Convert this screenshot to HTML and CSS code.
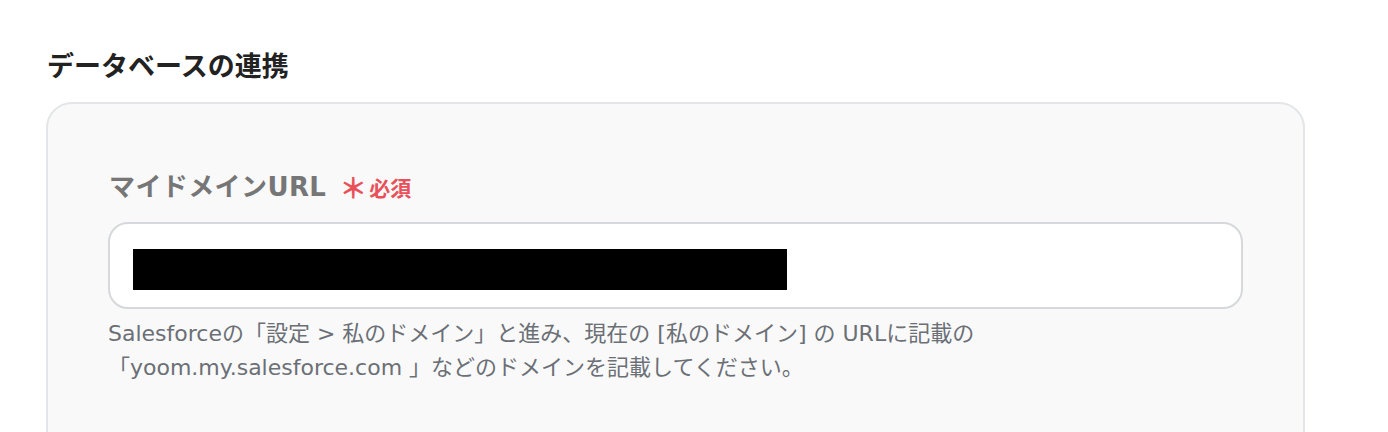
FILE: index.html
```html
<!DOCTYPE html>
<html lang="ja">
<head>
<meta charset="utf-8">
<link rel="stylesheet" href="styles.css">
</head>
<body>
<div class="page">
  <h2 class="title">データベースの連携</h2>
  <div class="card">
    <div class="field">
      <div class="label"><span class="name">マイドメインURL</span><span class="star">＊</span><span class="req">必須</span></div>
      <div class="input"><div class="mask"></div></div>
      <p class="help">Salesforceの「設定 &gt; 私のドメイン」と進み、現在の [私のドメイン] の URLに記載の<br>「yoom.my.salesforce.com 」などのドメインを記載してください。</p>
    </div>
  </div>
</div>
</body>
</html>
```

FILE: styles.css
```css
html, body {
  margin: 0;
  padding: 0;
  background: #ffffff;
}
body {
  font-family: "Noto Sans CJK JP", "Noto Sans", sans-serif;
}
.page {
  padding: 47px 83px 0 46px;
}
.title {
  margin: 0 0 19px 1px;
  font-size: 27px;
  line-height: 36px;
  font-weight: 700;
  color: #222222;
}
.card {
  background: #f9f9f9;
  border: 2px solid #e3e5e8;
  border-radius: 26px;
  padding: 65px 60px 60px 60px;
  height: 400px;
}
.label {
  display: flex;
  align-items: center;
  padding-left: 1px;
  height: 36px;
}
.name {
  font-family: "DejaVu Sans", "Noto Sans CJK JP", sans-serif;
  font-size: 26px;
  line-height: 36px;
  font-weight: 700;
  color: #767676;
  letter-spacing: 0.4px;
}
.star {
  font-family: "Noto Sans CJK JP", sans-serif;
  font-weight: 700;
  color: #e9505a;
  font-size: 28px;
  line-height: 36px;
  margin-left: 13px;
}
.req {
  font-family: "Noto Sans CJK JP", sans-serif;
  font-weight: 700;
  color: #e9505a;
  font-size: 21px;
  line-height: 36px;
  margin-left: 2px;
}
.input {
  margin-top: 17px;
  height: 87px;
  background: #ffffff;
  border: 2px solid #d6d8dc;
  border-radius: 20px;
  box-sizing: border-box;
  padding: 25px 23px;
}
.mask {
  width: 654px;
  height: 41px;
  background: #000000;
}
.help {
  font-family: "DejaVu Sans", "Noto Sans CJK JP", sans-serif;
  margin: 8px 0 0 0;
  font-size: 22px;
  line-height: 34px;
  color: #6b6f76;
}
```
